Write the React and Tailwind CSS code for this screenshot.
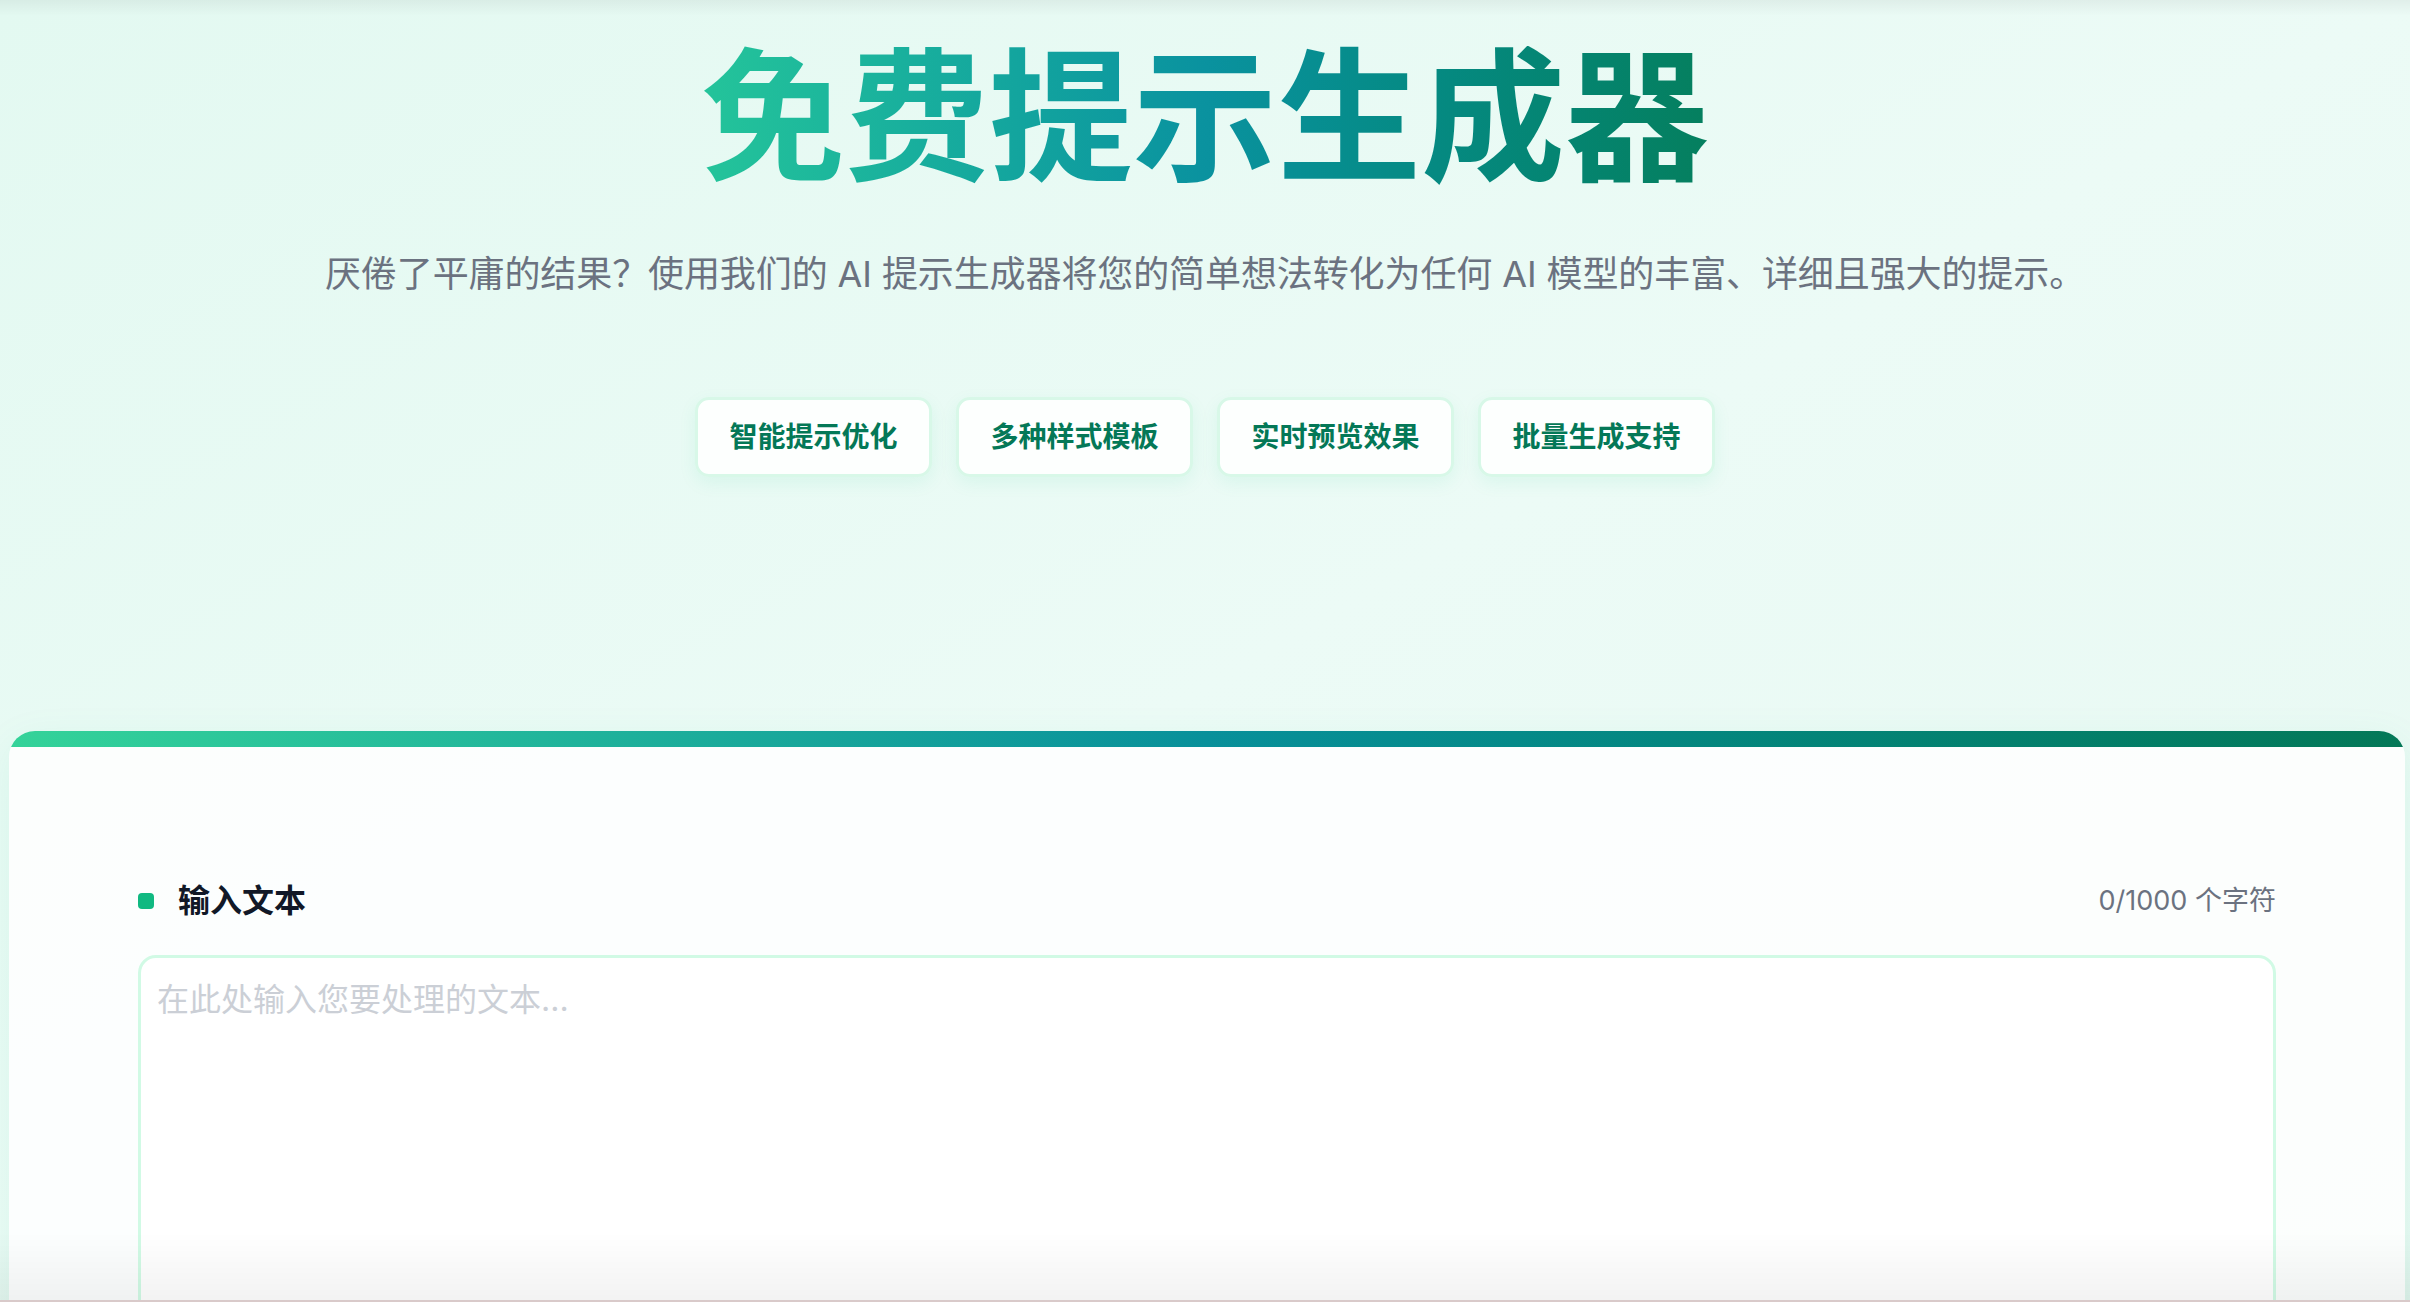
const features = ['智能提示优化', '多种样式模板', '实时预览效果', '批量生成支持'];

export default function App() {
  return (
    <div className="relative min-h-screen overflow-hidden bg-gradient-to-br from-[#e3f9f1] via-[#ecfbf6] to-[#e7f8f2] font-['Inter','Noto_Sans_CJK_SC',sans-serif]">
      {/* top edge shade */}
      <div className="pointer-events-none absolute inset-x-0 top-0 h-[16px] bg-gradient-to-b from-black/[0.05] to-transparent" />

      {/* hero */}
      <section className="flex flex-col items-center pt-[46px]">
        <h1 className="text-center text-[144px] font-bold leading-none">
          <span className="inline-block bg-gradient-to-r from-[#24c49a] via-[#0a929f] to-[#057f5e] bg-clip-text text-transparent">
            免费提示生成器
          </span>
        </h1>
        <p className="mt-[57px] text-center text-[36px] leading-[54px] tracking-[-0.1px] text-[#6b7280]">
          厌倦了平庸的结果？使用我们的 AI 提示生成器将您的简单想法转化为任何 AI 模型的丰富、详细且强大的提示。
        </p>
        <div className="mt-[96px] flex gap-[24px]">
          {features.map((f) => (
            <div
              key={f}
              className="flex h-[80px] w-[237px] items-center justify-center rounded-[14px] border-[3px] border-[#d8f8e8] bg-white/90 text-[28px] font-semibold text-[#047857] shadow-[0_6px_18px_rgba(16,185,129,0.08)]"
            >
              {f}
            </div>
          ))}
        </div>
      </section>

      {/* input card */}
      <section className="mt-[254px] ml-[9px] mr-[5px] overflow-hidden rounded-t-[26px] bg-white/85 shadow-[0_10px_40px_rgba(16,185,129,0.08)]">
        <div className="h-[16px] bg-gradient-to-r from-[#34d399] via-[#08909a] to-[#047857]" />
        <div className="px-[129px] pt-[131px]">
          <div className="flex h-[46px] items-center justify-between">
            <div className="flex items-center gap-[24px]">
              <span className="h-[16px] w-[16px] rounded-[4px] bg-[#10b981]" />
              <span className="text-[32px] font-bold text-[#111827]">输入文本</span>
            </div>
            <span className="text-[27px] text-[#6b7280]">0/1000 个字符</span>
          </div>
          <textarea
            className="mt-[31px] block h-[420px] w-full resize-none rounded-[18px] border-[3px] border-[#d1fae5] bg-white px-[16px] py-[19px] text-[32px] leading-[46px] text-[#111827] outline-none placeholder:text-[#cbcfd6]"
            placeholder="在此处输入您要处理的文本..."
          />
        </div>
      </section>

      {/* bottom edge shade */}
      <div className="pointer-events-none fixed inset-x-0 bottom-0 h-[70px] bg-gradient-to-b from-transparent to-black/[0.05]" />
      <div className="pointer-events-none fixed inset-x-0 bottom-0 h-[2px] bg-[#d9caca]" />
    </div>
  );
}
